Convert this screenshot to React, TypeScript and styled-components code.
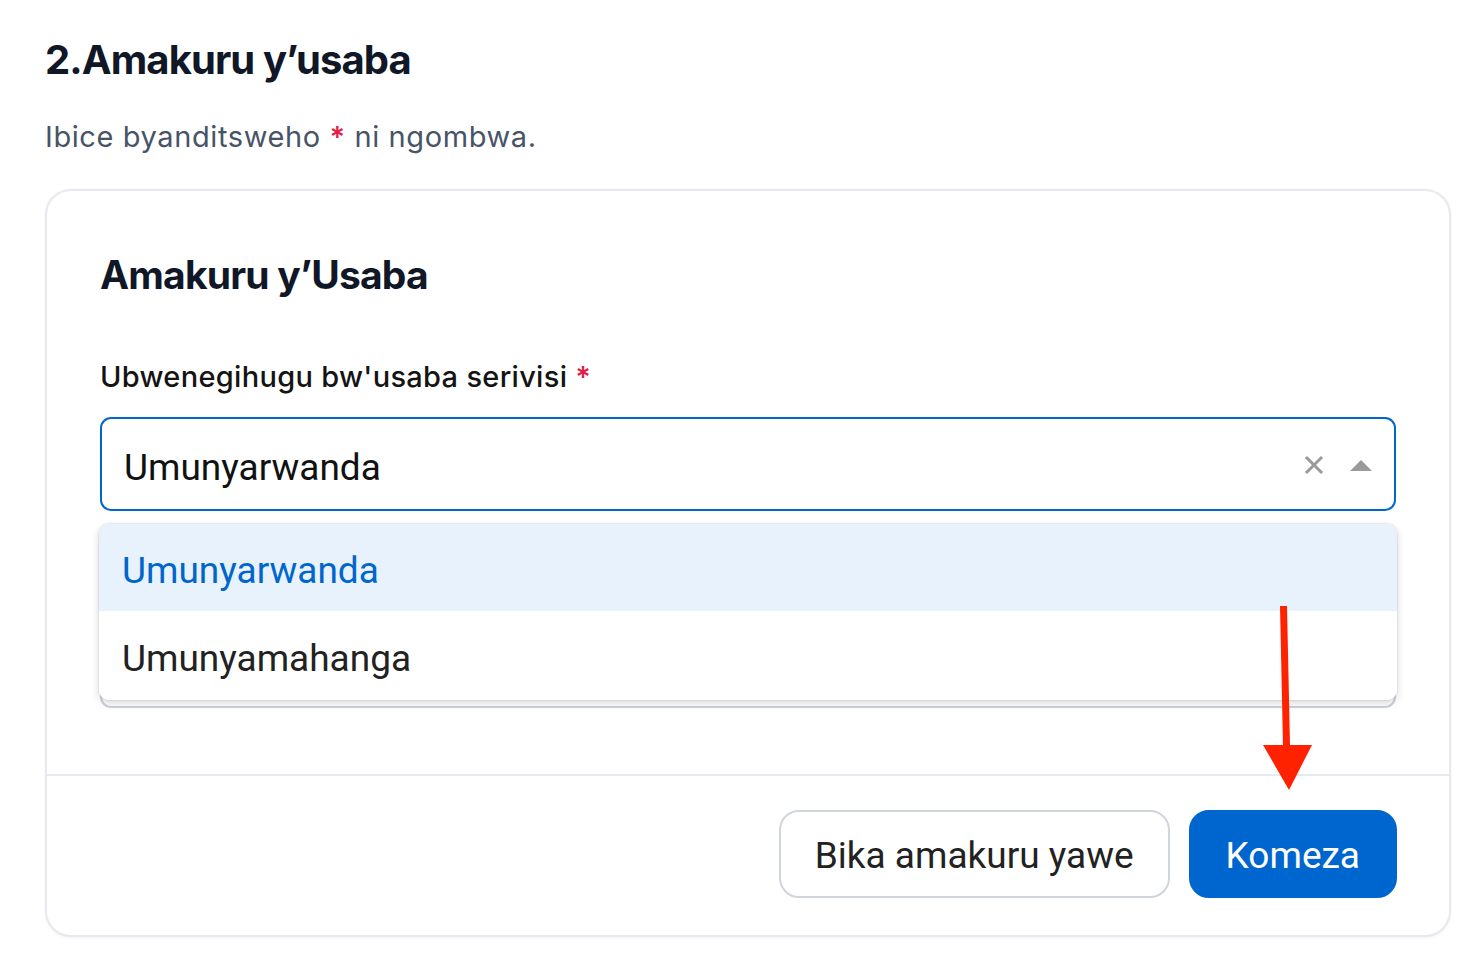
import styled, { createGlobalStyle } from "styled-components";

const GlobalStyle = createGlobalStyle`
  html, body {
    margin: 0;
    padding: 0;
    background: #ffffff;
  }
  * {
    box-sizing: border-box;
  }
`;

const Page = styled.div`
  position: relative;
  width: 1470px;
  min-height: 958px;
  padding: 36px 19px 0 45px;
  font-family: Inter, "Noto Sans", sans-serif;
`;

const PageTitle = styled.h2`
  margin: 0;
  font-size: 40px;
  line-height: 48px;
  font-weight: 700;
  letter-spacing: -0.9px;
  color: #101828;
`;

const Note = styled.p`
  margin: 35px 0 0;
  font-size: 29px;
  line-height: 36px;
  font-weight: 400;
  letter-spacing: 0.6px;
  color: #475467;
`;

const Star = styled.span`
  color: #e11d48;
  font-weight: 600;
`;

const Card = styled.section`
  margin-top: 34px;
  border: 2px solid #e8e8ee;
  border-radius: 26px;
  background: #fff;
  box-shadow: 0 1px 3px rgba(16, 24, 40, 0.06);
`;

const CardBody = styled.div`
  padding: 60px 53px 66px 53px;
  display: flex;
  flex-direction: column;
`;

const CardTitle = styled.h3`
  margin: 0 0 60px;
  font-size: 39px;
  line-height: 48px;
  font-weight: 700;
  letter-spacing: -0.8px;
  color: #101828;
`;

const Field = styled.div<{ $gap?: number }>`
  display: flex;
  flex-direction: column;
  margin-top: ${({ $gap }) => ($gap ? `${$gap}px` : "0")};
`;

const Label = styled.label`
  font-size: 29px;
  line-height: 36px;
  font-weight: 500;
  letter-spacing: 0.3px;
  color: #141414;
  margin-bottom: 22px;
`;

// the field that sits under the open menu: only its lower edge shows
const HiddenLabel = styled(Label)`
  visibility: hidden;
`;

const SelectWrap = styled.div`
  position: relative;
`;

const SelectBox = styled.div<{ $focused?: boolean }>`
  height: 94px;
  border: 2px solid ${({ $focused }) => ($focused ? "#0066cc" : "#ccd2dc")};
  border-radius: 11px;
  display: flex;
  align-items: center;
  padding: 6px 22px 0;
  font-family: Roboto, "Noto Sans", sans-serif;
  font-size: 37px;
  color: #111;
  background: #fff;
`;

const Value = styled.span`
  flex: 1;
`;

const Indicators = styled.div`
  display: flex;
  align-items: center;
  gap: 26px;
  margin-top: -4px;
`;

const Menu = styled.ul`
  position: absolute;
  left: -1px;
  right: -1px;
  top: calc(100% + 13px);
  margin: 0;
  padding: 0;
  list-style: none;
  background: #fff;
  border-radius: 10px;
  overflow: hidden;
  box-shadow: 0 0 0 1px rgba(0, 0, 0, 0.05), 0 3px 8px rgba(0, 0, 0, 0.16);
  z-index: 2;
`;

const Option = styled.li<{ $selected?: boolean }>`
  height: ${({ $selected }) => ($selected ? "87px" : "89px")};
  display: flex;
  align-items: center;
  padding: 6px 23px 0;
  font-family: Roboto, "Noto Sans", sans-serif;
  font-size: 37px;
  background: ${({ $selected }) => ($selected ? "#e8f2fd" : "#fff")};
  color: ${({ $selected }) => ($selected ? "#0066cc" : "#222")};
`;

const Footer = styled.div`
  border-top: 2px solid #e8e8ee;
  display: flex;
  justify-content: flex-end;
  gap: 19px;
  padding: 34px 52px 37px;
`;

const Button = styled.button<{ $primary?: boolean }>`
  height: 88px;
  padding: 2px ${({ $primary }) => ($primary ? "35px" : "34px")} 0;
  border-radius: 20px;
  font-family: Roboto, "Noto Sans", sans-serif;
  font-size: 37px;
  cursor: pointer;
  border: 2px solid ${({ $primary }) => ($primary ? "#0066cf" : "#d0d5dd")};
  background: ${({ $primary }) => ($primary ? "#0066cf" : "#fff")};
  color: ${({ $primary }) => ($primary ? "#fff" : "#222")};
`;

const ArrowLayer = styled.svg`
  position: absolute;
  left: 1255px;
  top: 600px;
  pointer-events: none;
  z-index: 5;
`;

const ClearIcon = () => (
  <svg width="20" height="20" viewBox="0 0 20 20">
    <path d="M3 3 L17 17 M17 3 L3 17" stroke="#9a9a9a" strokeWidth="3" strokeLinecap="square" />
  </svg>
);

const CaretUp = () => (
  <svg width="22" height="11" viewBox="0 0 22 11">
    <path d="M0 11 L11 0 L22 11 Z" fill="#9a9a9a" />
  </svg>
);

export default function App() {
  return (
    <Page>
      <GlobalStyle />
      <PageTitle>2.Amakuru y’usaba</PageTitle>
      <Note>
        Ibice byanditsweho <Star>*</Star> ni ngombwa.
      </Note>

      <Card>
        <CardBody>
          <CardTitle>Amakuru y’Usaba</CardTitle>

          <Field>
            <Label>
              Ubwenegihugu bw'usaba serivisi <Star>*</Star>
            </Label>
            <SelectWrap>
              <SelectBox $focused>
                <Value>Umunyarwanda</Value>
                <Indicators>
                  <ClearIcon />
                  <CaretUp />
                </Indicators>
              </SelectBox>
              <Menu>
                <Option $selected>Umunyarwanda</Option>
                <Option>Umunyamahanga</Option>
              </Menu>
            </SelectWrap>
          </Field>

          <Field $gap={45}>
            <HiddenLabel>Indangamuntu</HiddenLabel>
            <SelectBox />
          </Field>
        </CardBody>

        <Footer>
          <Button>Bika amakuru yawe</Button>
          <Button $primary>Komeza</Button>
        </Footer>
      </Card>

      <ArrowLayer width="70" height="200" viewBox="0 0 70 200">
        <path d="M25 6 L32 6 L35 146 L28 146 Z" fill="#ff2200" />
        <path d="M8 145 L57 145 L34 190 Z" fill="#ff2200" />
      </ArrowLayer>
    </Page>
  );
}
